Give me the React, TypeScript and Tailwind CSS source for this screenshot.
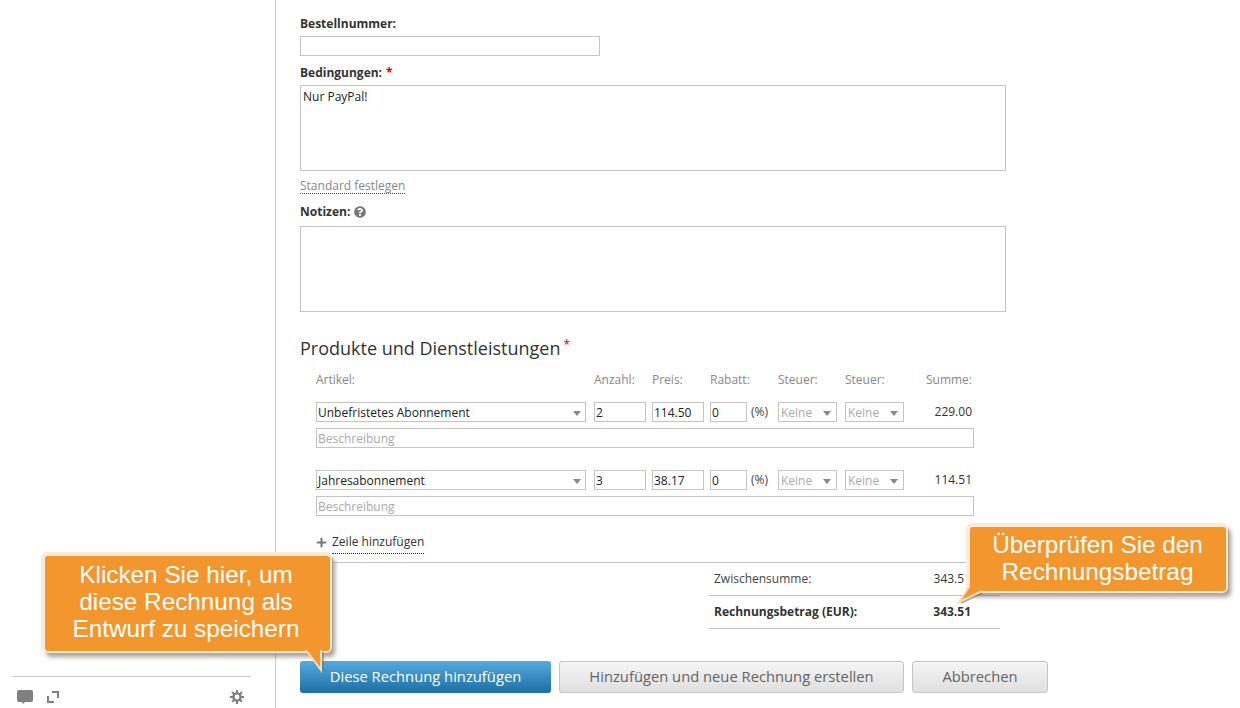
import { FaPlus, FaQuestionCircle } from "react-icons/fa";

const Caret = () => (
  <svg width="8" height="5" viewBox="0 0 8 5" className="shrink-0">
    <path d="M0 0h8L4 5z" fill="#888888" />
  </svg>
);

const Box = ({ className, children }: { className: string; children?: React.ReactNode }) => (
  <div className={`h-5 border border-[#c4c4c4] bg-white pt-[2px] flex items-center ${className}`}>{children}</div>
);

const Label = ({ children }: { children: React.ReactNode }) => (
  <div className="h-[18px] leading-[18px] text-xs font-bold text-[#333333] flex items-center">{children}</div>
);

interface LineItem {
  name: string;
  qty: string;
  price: string;
  total: string;
}

const items: LineItem[] = [
  { name: "Unbefristetes Abonnement", qty: "2", price: "114.50", total: "229.00" },
  { name: "Jahresabonnement", qty: "3", price: "38.17", total: "114.51" },
];

const TaxSelect = () => (
  <Box className="w-[59px] pl-[2px] pr-[5px] justify-between text-xs text-[#aaaaaa]">
    <span>Keine</span>
    <Caret />
  </Box>
);

const Row = ({ item }: { item: LineItem }) => (
  <div className="mb-[22px]">
    <div className="flex items-center text-xs text-[#222222]">
      <Box className="w-[270px] pl-[1px] pr-[4px] justify-between">
        <span>{item.name}</span>
        <Caret />
      </Box>
      <Box className="ml-2 w-[52px] pl-[1px]">{item.qty}</Box>
      <Box className="ml-[6px] w-[52px] pl-[1px]">{item.price}</Box>
      <Box className="ml-[6px] w-[37px] pl-[1px]">0</Box>
      <span className="ml-[4px] w-[27px] text-[#444444]">(%)</span>
      <TaxSelect />
      <div className="ml-2">
        <TaxSelect />
      </div>
      <span className="ml-2 w-[60px] text-right text-[#333333]">{item.total}</span>
    </div>
    <Box className="mt-[6px] w-[658px] pl-[1px] text-xs text-[#aaaaaa]">Beschreibung</Box>
  </div>
);

const Callout = ({ className, lines, tail }: { className: string; lines: string[]; tail: React.ReactNode }) => (
  <div
    className={`absolute rounded-[3px] bg-[#f4962e] text-center text-white text-[24.3px] leading-[27px] shadow-[-1px_-1px_0_3px_#fdebd8,1px_1px_0_2px_#b5a596,3px_4px_4px_2px_rgba(80,70,60,0.5)] ${className}`}
    style={{ fontFamily: '"Liberation Sans", Arial, sans-serif' }}
  >
    {lines.map((l) => (
      <div key={l}>{l}</div>
    ))}
    {tail}
  </div>
);

export default function App() {
  return (
    <div
      className="relative flex h-[708px] w-[1240px] overflow-hidden bg-white text-[#333333]"
      style={{ fontFamily: '"Open Sans", sans-serif' }}
    >
      <aside className="flex w-[276px] shrink-0 flex-col justify-end border-r border-[#cccccc] pl-3 pr-6">
        <div className="flex h-[32px] items-center border-t border-[#cccccc] pl-[5px] pr-[7px] pt-2 text-[#808080]">
          <svg width="16" height="14" viewBox="0 0 16 14">
            <path d="M2 0h12a2 2 0 0 1 2 2v8a2 2 0 0 1-2 2H8l-2 2-1-2H2a2 2 0 0 1-2-2V2a2 2 0 0 1 2-2z" fill="#808080" />
          </svg>
          <svg width="12" height="12" viewBox="0 0 12 12" className="ml-[14px]">
            <path d="M5 0h7v7h-2V2H5zM0 5h2v5h5v2H0z" fill="#808080" />
          </svg>
          {/* gear: open ring with eight square teeth */}
          <svg width="14" height="14" viewBox="0 0 14 14" className="ml-auto">
            <circle cx="7" cy="7" r="3.6" fill="none" stroke="#808080" strokeWidth="2.4" />
            <path
              d="M7 0v14M0 7h14M2 2l10 10M12 2L2 12"
              stroke="#808080"
              strokeWidth="2"
              strokeDasharray="3 8 3"
              fill="none"
            />
          </svg>
        </div>
      </aside>

      <main className="flex-1 pl-6 pt-[15px]">
        <Label>Bestellnummer:</Label>
        <Box className="mt-[3px] w-[300px]" />

        <div className="mt-2">
          <Label>
            Bedingungen: <span className="ml-1 text-[#cc0000]">*</span>
          </Label>
        </div>
        <div className="mt-[3px] h-[86px] w-[706px] border border-[#c4c4c4] px-[2px] py-[3px] text-xs text-[#222222]">
          Nur PayPal!
        </div>
        <div className="mt-[7px] w-fit border-b border-dotted border-[#555555] text-xs leading-[15px] text-[#888888]">
          Standard festlegen
        </div>
        <div className="mt-[2px] pt-[7px]">
          <Label>
            Notizen:
            <FaQuestionCircle className="ml-1 h-3 w-3 text-[#777777]" />
          </Label>
        </div>
        <div className="mt-[5px] h-[86px] w-[706px] border border-[#c4c4c4]" />

        <h2 className="mt-[23px] flex h-[26px] items-start text-[18px] leading-[26px] font-normal text-[#333333]">
          Produkte und Dienstleistungen
          <span className="ml-[3px] mt-[3px] text-xs leading-[14px] text-[#cc0000]">*</span>
        </h2>

        <div className="pl-4">
          <div className="mt-[11px] mb-[14px] flex h-4 items-center text-xs leading-4 text-[#888888]">
            <span className="w-[278px]">Artikel:</span>
            <span className="w-[58px]">Anzahl:</span>
            <span className="w-[58px]">Preis:</span>
            <span className="w-[68px]">Rabatt:</span>
            <span className="w-[67px]">Steuer:</span>
            <span className="w-[67px]">Steuer:</span>
            <span className="w-[60px] text-right">Summe:</span>
          </div>
          {items.map((item) => (
            <Row key={item.name} item={item} />
          ))}
          <div className="-mt-[5px] flex items-start">
            <FaPlus className="mt-[4px] h-[11px] w-[11px] text-[#777777]" />
            <span className="ml-[5px] border-b border-dotted border-[#333333] pt-[1px] pb-[3px] text-xs leading-[16px] text-[#333333]">
              Zeile hinzufügen
            </span>
          </div>
        </div>

        <div className="mt-[8px] w-[700px] border-t border-[#c4c4c4]">
          <div className="ml-[409px] w-[291px] text-xs">
            <div className="flex h-[33px] items-center justify-between border-b border-[#c4c4c4] pl-[5px] pr-[29px]">
              <span className="text-[#444444]">Zwischensumme:</span>
              <span>343.51</span>
            </div>
            <div className="flex h-[33px] items-center justify-between border-b border-[#c4c4c4] pl-[5px] pr-[29px] font-bold">
              <span>Rechnungsbetrag (EUR):</span>
              <span>343.51</span>
            </div>
          </div>
        </div>

        <div className="mt-8 flex gap-2 text-[14.75px]">
          <button className="h-8 w-[251px] rounded-[3px] bg-gradient-to-b from-[#55aade] to-[#1b6fa3] pb-[2px] text-white">
            Diese Rechnung hinzufügen
          </button>
          <button className="h-8 w-[345px] rounded-[3px] border border-[#c4c4c4] bg-gradient-to-b from-[#f5f5f5] to-[#e0e0e0] pb-[2px] text-[#666666]">
            Hinzufügen und neue Rechnung erstellen
          </button>
          <button className="h-8 w-[136px] rounded-[3px] border border-[#c4c4c4] bg-gradient-to-b from-[#f5f5f5] to-[#e0e0e0] pb-[2px] text-[#666666]">
            Abbrechen
          </button>
        </div>
      </main>

      <Callout
        className="left-[45px] top-[556px] h-[95px] w-[285px] pr-[3px] pt-[5px]"
        lines={["Klicken Sie hier, um", "diese Rechnung als", "Entwurf zu speichern"]}
        tail={
          <svg width="1" height="1" className="absolute left-0 top-0 overflow-visible">
            <path d="M278 96 L278 115" stroke="#7d7266" strokeWidth="2" opacity="0.6" fill="none" />
            <path d="M261 94 L276 114 L276 94" fill="#f4962e" stroke="#fbd9b4" strokeWidth="2" />
            <path d="M262 90 H275 V95 H262z" fill="#f4962e" />
          </svg>
        }
      />
      <Callout
        className="left-[970px] top-[527px] h-[64px] w-[256px] pr-[1px] pt-[4px]"
        lines={["Überprüfen Sie den", "Rechnungsbetrag"]}
        tail={
          <svg width="1" height="1" className="absolute left-0 top-0 overflow-visible">
            <path d="M-9 76 L12 66" stroke="#7d7266" strokeWidth="2" opacity="0.6" fill="none" />
            <path d="M-1 60 L-11 75 L12 64" fill="#f4962e" stroke="#fbd9b4" strokeWidth="2" />
            <path d="M0 58 H14 V63 H0z" fill="#f4962e" />
          </svg>
        }
      />
    </div>
  );
}
